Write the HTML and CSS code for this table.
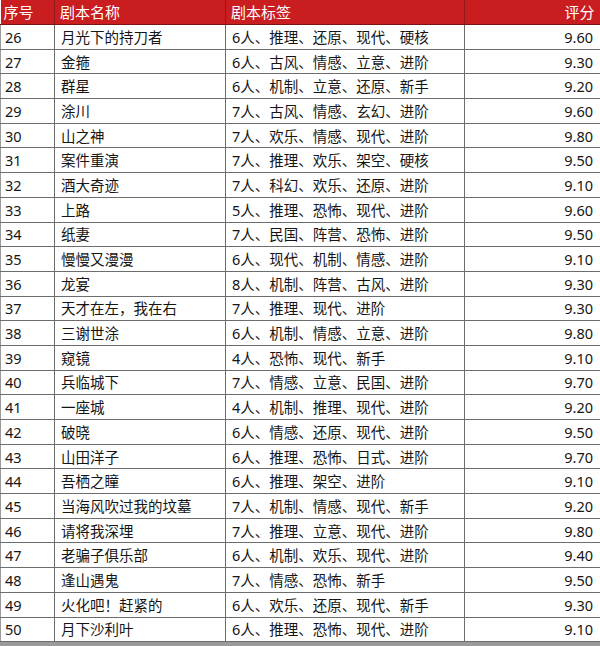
FILE: index.html
```html
<!DOCTYPE html>
<html lang="zh">
<head>
<meta charset="utf-8">
<link rel="stylesheet" href="styles.css">
</head>
<body>
<table class="sheet">
<colgroup><col class="c-no"><col class="c-name"><col class="c-tags"><col class="c-score"></colgroup>
<thead>
<tr><th>序号</th><th>剧本名称</th><th>剧本标签</th><th class="num">评分</th></tr>
</thead>
<tbody>
<tr><td>26</td><td>月光下的持刀者</td><td>6人、推理、还原、现代、硬核</td><td class="num">9.60</td></tr>
<tr><td>27</td><td>金箍</td><td>6人、古风、情感、立意、进阶</td><td class="num">9.30</td></tr>
<tr><td>28</td><td>群星</td><td>6人、机制、立意、还原、新手</td><td class="num">9.20</td></tr>
<tr><td>29</td><td>涂川</td><td>7人、古风、情感、玄幻、进阶</td><td class="num">9.60</td></tr>
<tr><td>30</td><td>山之神</td><td>7人、欢乐、情感、现代、进阶</td><td class="num">9.80</td></tr>
<tr><td>31</td><td>案件重演</td><td>7人、推理、欢乐、架空、硬核</td><td class="num">9.50</td></tr>
<tr><td>32</td><td>酒大奇迹</td><td>7人、科幻、欢乐、还原、进阶</td><td class="num">9.10</td></tr>
<tr><td>33</td><td>上路</td><td>5人、推理、恐怖、现代、进阶</td><td class="num">9.60</td></tr>
<tr><td>34</td><td>纸妻</td><td>7人、民国、阵营、恐怖、进阶</td><td class="num">9.50</td></tr>
<tr><td>35</td><td>慢慢又漫漫</td><td>6人、现代、机制、情感、进阶</td><td class="num">9.10</td></tr>
<tr><td>36</td><td>龙宴</td><td>8人、机制、阵营、古风、进阶</td><td class="num">9.30</td></tr>
<tr><td>37</td><td>天才在左，我在右</td><td>7人、推理、现代、进阶</td><td class="num">9.30</td></tr>
<tr><td>38</td><td>三谢世涂</td><td>6人、机制、情感、立意、进阶</td><td class="num">9.80</td></tr>
<tr><td>39</td><td>窥镜</td><td>4人、恐怖、现代、新手</td><td class="num">9.10</td></tr>
<tr><td>40</td><td>兵临城下</td><td>7人、情感、立意、民国、进阶</td><td class="num">9.70</td></tr>
<tr><td>41</td><td>一座城</td><td>4人、机制、推理、现代、进阶</td><td class="num">9.20</td></tr>
<tr><td>42</td><td>破晓</td><td>6人、情感、还原、现代、进阶</td><td class="num">9.50</td></tr>
<tr><td>43</td><td>山田洋子</td><td>6人、推理、恐怖、日式、进阶</td><td class="num">9.70</td></tr>
<tr><td>44</td><td>吾栖之瞳</td><td>6人、推理、架空、进阶</td><td class="num">9.10</td></tr>
<tr><td>45</td><td>当海风吹过我的坟墓</td><td>7人、机制、情感、现代、新手</td><td class="num">9.20</td></tr>
<tr><td>46</td><td>请将我深埋</td><td>7人、推理、立意、现代、进阶</td><td class="num">9.80</td></tr>
<tr><td>47</td><td>老骗子俱乐部</td><td>6人、机制、欢乐、现代、进阶</td><td class="num">9.40</td></tr>
<tr><td>48</td><td>逢山遇鬼</td><td>7人、情感、恐怖、新手</td><td class="num">9.50</td></tr>
<tr><td>49</td><td>火化吧！赶紧的</td><td>6人、欢乐、还原、现代、新手</td><td class="num">9.30</td></tr>
<tr><td>50</td><td>月下沙利叶</td><td>6人、推理、恐怖、现代、进阶</td><td class="num">9.10</td></tr>
</tbody>
</table>
</body>
</html>
```

FILE: styles.css
```css
html, body {
  margin: 0;
  padding: 0;
}
body {
  background: #9a9a9a;
  width: 600px;
  height: 646px;
  overflow: hidden;
  font-family: "Noto Sans", "Noto Sans CJK SC", sans-serif;
  font-size: 14.5px;
  color: #151515;
}
.sheet {
  width: 600px;
  border-collapse: collapse;
  table-layout: fixed;
  background: #fff;
}
.c-no { width: 54px; }
.c-name { width: 171px; }
.c-tags { width: 239px; }
.c-score { width: 136px; }
.sheet th {
  background: #c91d1f;
  color: #fff;
  font-weight: normal;
  font-size: 15px;
  text-align: left;
  height: 24px;
  padding: 0 5px;
  line-height: 24px;
  border-left: 1px solid #8e1a1a;
  border-bottom: 1px solid #7a1515;
}
.sheet th:first-child { border-left: none; padding-left: 3px; }
.sheet td {
  height: 23.7px;
  padding: 0 6px;
  line-height: 20px;
  white-space: nowrap;
  border: 1px solid #6d6d6d;
}
.sheet td:first-child { padding-left: 4px; border-left: 1px solid #9a9a9a; }
.sheet td:last-child { border-right: 1px solid #9a9a9a; }
.sheet .num { text-align: right; padding-right: 7px; }
.sheet th.num { padding-right: 6px; }
```
